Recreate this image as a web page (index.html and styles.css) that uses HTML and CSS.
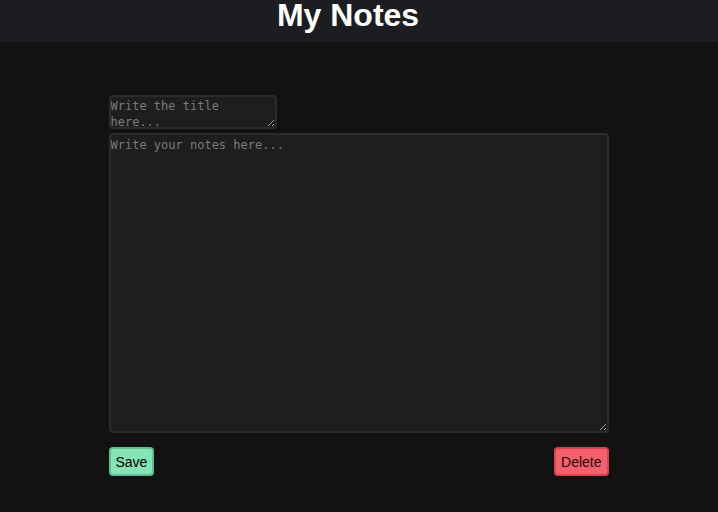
FILE: index.html
```html
<!DOCTYPE html>
<html>
<head>
<meta charset="utf-8">
<link rel="stylesheet" href="styles.css">
</head>
<body>
<header class="header"><h1 class="title">My Notes</h1></header>
<main class="main">
  <textarea class="note-title" placeholder="Write the title here..."></textarea>
  <textarea class="note-body" placeholder="Write your notes here..."></textarea>
  <div class="actions">
    <button class="btn save">Save</button>
    <button class="btn delete">Delete</button>
  </div>
</main>
</body>
</html>
```
FILE: styles.css
```css
html, body { margin: 0; padding: 0; }
body {
  background: #121212;
  font-family: "Liberation Sans", Arial, sans-serif;
  height: 512px;
  overflow: hidden;
}
.header {
  height: 42px;
  background: #1c1d20;
  display: flex;
  justify-content: center;
  padding-right: 22px;
  overflow: hidden;
}
.title {
  margin: -1px 0 0 0;
  font-size: 32px;
  line-height: 32px;
  font-weight: bold;
  color: #ffffff;
}
.main {
  width: 500px;
  margin: 53px auto 0 auto;
  display: flex;
  flex-direction: column;
  position: relative;
  left: -0.5px;
}
textarea {
  box-sizing: border-box;
  background: #1e1e1e;
  border: 2px solid #2c2c2c;
  border-radius: 4px;
  color: #ddd;
  font-family: Consolas, "DejaVu Sans Mono", monospace;
  font-size: 12px;
  line-height: 16px;
  padding: 0 0;
  margin: 0;
  outline: none;
}
textarea::placeholder { color: #7a7a7a; }
.note-title {
  width: 168px;
  height: 34px;
  padding-top: 1px;
}
.note-body {
  width: 500px;
  height: 300px;
  margin-top: 4px;
  padding: 2px 0;
}
.actions {
  display: flex;
  justify-content: space-between;
  margin-top: 14px;
  width: 500px;
}
.btn {
  box-sizing: border-box;
  height: 29px;
  border-radius: 4px;
  font-family: "Liberation Sans", Arial, sans-serif;
  font-size: 14px;
  padding: 0 5px;
  color: #000;
}
.save {
  background: #86e3b5;
  border: 2px solid #5fbf8f;
}
.delete {
  background: #f4606b;
  border: 2px solid #d6454f;
  color: #2a0508;
}
```
